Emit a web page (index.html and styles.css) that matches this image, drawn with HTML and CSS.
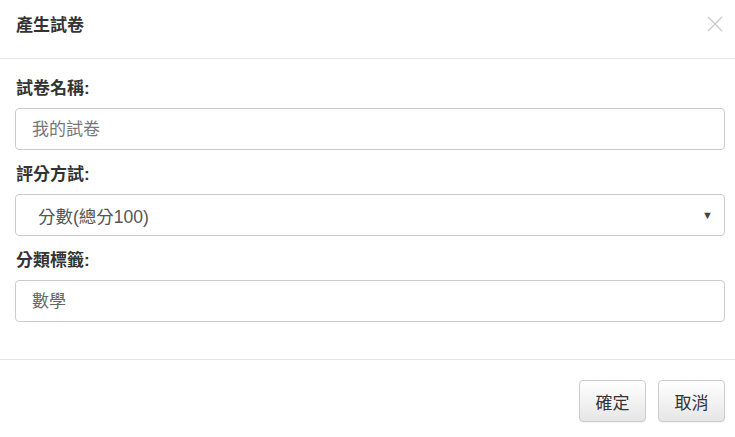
FILE: index.html
```html
<!DOCTYPE html>
<html lang="zh-Hant">
<head>
<meta charset="utf-8">
<link rel="stylesheet" href="styles.css">
</head>
<body>
<div class="modal">
  <div class="modal-header">
    <h4 class="modal-title">產生試卷</h4>
    <button class="close" aria-label="close">
      <svg width="16" height="16" viewBox="0 0 16 16"><path d="M1 1L15 15M15 1L1 15" stroke="#c8c8c8" stroke-width="1.2" fill="none"/></svg>
    </button>
  </div>
  <div class="modal-body">
    <label class="label">試卷名稱:</label>
    <div class="control"><span class="placeholder">我的試卷</span></div>
    <label class="label">評分方試:</label>
    <div class="control select"><span class="select-text">分數(總分100)</span><span class="caret">▼</span></div>
    <label class="label">分類標籤:</label>
    <div class="control"><span class="value">數學</span></div>
  </div>
  <div class="modal-footer">
    <button class="btn">確定</button>
    <button class="btn">取消</button>
  </div>
</div>
</body>
</html>
```
FILE: styles.css
```css
html, body {
  margin: 0;
  padding: 0;
  background: #fff;
}
body {
  font-family: "Liberation Sans", "Noto Sans CJK TC", sans-serif;
  color: #333;
}
.modal {
  width: 735px;
  height: 437px;
  display: flex;
  flex-direction: column;
}
.modal-header {
  height: 58px;
  border-bottom: 1px solid #e5e5e5;
  display: flex;
  align-items: center;
  justify-content: space-between;
  padding: 0 12px 0 16px;
  box-sizing: content-box;
}
.modal-title {
  margin: 0;
  font-size: 17px;
  font-weight: bold;
  color: #333;
  line-height: 20px;
  position: relative;
  top: -3px;
}
.close {
  border: 0;
  background: none;
  padding: 0;
  width: 16px;
  height: 16px;
  display: flex;
  position: relative;
  top: -5px;
}
.modal-body {
  padding: 19px 10px 37px 15px;
  display: flex;
  flex-direction: column;
}
.label {
  display: block;
  font-size: 17px;
  font-weight: bold;
  line-height: 22px;
  margin: 14px 0 8px 1px;
  color: #333;
}
.label:first-child {
  margin-top: 0;
}
.control {
  height: 42px;
  border: 1px solid #ccc;
  border-radius: 4px;
  box-sizing: border-box;
  display: flex;
  align-items: center;
  padding: 0 16px;
  font-size: 17px;
  color: #555;
}
.placeholder {
  color: #777;
  position: relative;
  top: -2px;
}
.value {
  color: #666;
  position: relative;
  top: -2px;
}
.select {
  justify-content: space-between;
  padding: 0 11px 0 22px;
}
.select-text {
  color: #555;
  font-size: 17.5px;
}
.caret {
  font-size: 11px;
  color: #444;
}
.modal-footer {
  border-top: 1px solid #e5e5e5;
  padding: 20px 10px 0 0;
  display: flex;
  justify-content: flex-end;
  gap: 12px;
}
.btn {
  width: 67px;
  height: 42px;
  border: 1px solid #ccc;
  border-radius: 4px;
  background: linear-gradient(#fff, #e6e6e6);
  font-family: "Liberation Sans", "Noto Sans CJK TC", sans-serif;
  font-size: 17px;
  color: #333;
  padding: 0;
  box-shadow: 0 1px 1px rgba(0,0,0,0.05);
}
```
